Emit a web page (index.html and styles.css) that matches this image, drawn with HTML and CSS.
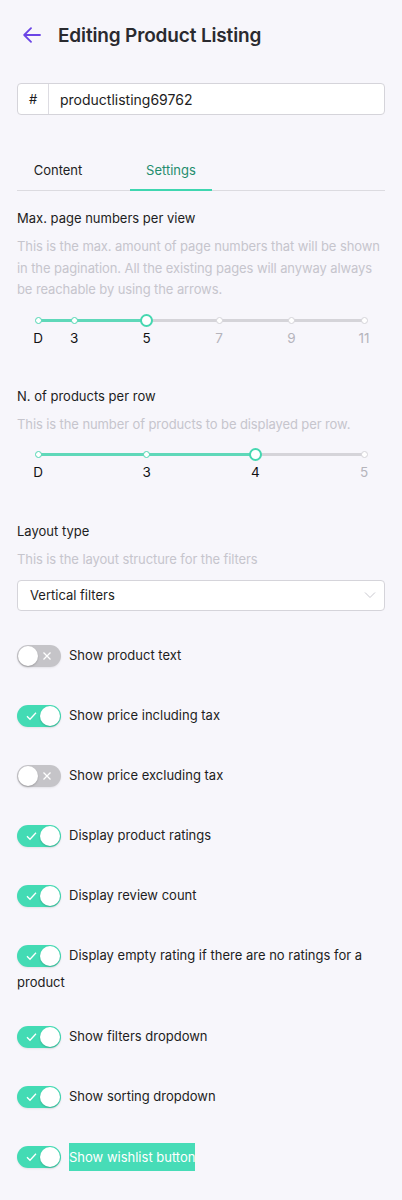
FILE: index.html
```html
<!DOCTYPE html>
<html>
<head>
<meta charset="utf-8">
<link rel="stylesheet" href="styles.css">
</head>
<body>
<div class="page">
  <header class="header">
    <svg class="back" width="18" height="16" viewBox="0 0 18 16"><path d="M17 8H1.5M8 1.2L1.2 8L8 14.8" fill="none" stroke="#6b45e6" stroke-width="1.8" stroke-linecap="round" stroke-linejoin="round"/></svg>
    <h1 class="title">Editing Product Listing</h1>
  </header>

  <div class="idfield">
    <span class="hash">#</span>
    <span class="idval">productlisting69762</span>
  </div>

  <nav class="tabs">
    <span class="tab">Content</span>
    <span class="tab active">Settings</span>
  </nav>

  <section class="field">
    <div class="label">Max. page numbers per view</div>
    <div class="desc">This is the max. amount of page numbers that will be shown in the pagination. All the existing pages will anyway always be reachable by using the arrows.</div>
    <div class="slider">
      <div class="track"><div class="fill" style="width:33.333%"></div></div>
      <span class="dot on" style="left:0%"></span>
      <span class="dot on" style="left:11.111%"></span>
      <span class="handle" style="left:33.333%"></span>
      <span class="dot" style="left:55.556%"></span>
      <span class="dot" style="left:77.778%"></span>
      <span class="dot" style="left:100%"></span>
      <span class="tick on" style="left:0%">D</span>
      <span class="tick on" style="left:11.111%">3</span>
      <span class="tick on" style="left:33.333%">5</span>
      <span class="tick" style="left:55.556%">7</span>
      <span class="tick" style="left:77.778%">9</span>
      <span class="tick" style="left:100%">11</span>
    </div>
  </section>

  <section class="field f2">
    <div class="label">N. of products per row</div>
    <div class="desc">This is the number of products to be displayed per row.</div>
    <div class="slider">
      <div class="track"><div class="fill" style="width:66.667%"></div></div>
      <span class="dot on" style="left:0%"></span>
      <span class="dot on" style="left:33.333%"></span>
      <span class="handle" style="left:66.667%"></span>
      <span class="dot" style="left:100%"></span>
      <span class="tick on" style="left:0%">D</span>
      <span class="tick on" style="left:33.333%">3</span>
      <span class="tick on" style="left:66.667%">4</span>
      <span class="tick" style="left:100%">5</span>
    </div>
  </section>

  <section class="field f3">
    <div class="label">Layout type</div>
    <div class="desc">This is the layout structure for the filters</div>
    <div class="select">
      <span>Vertical filters</span>
      <svg width="12" height="8" viewBox="0 0 12 8"><path d="M1 1.5L6 6.5L11 1.5" fill="none" stroke="#c9c8cf" stroke-width="1"/></svg>
    </div>
  </section>

  <div class="toggles">
    <div class="row"><span class="tg off"><svg class="ic" width="10" height="10" viewBox="0 0 10 10"><path d="M1.5 1.5L8.5 8.5M8.5 1.5L1.5 8.5" stroke="#fff" stroke-width="1.3"/></svg><span class="knob"></span></span>Show product text</div>
    <div class="row"><span class="tg"><svg class="ic" width="11" height="10" viewBox="0 0 11 10"><path d="M1 5.2L4 8.2L10 1.8" fill="none" stroke="#fff" stroke-width="1.3"/></svg><span class="knob"></span></span>Show price including tax</div>
    <div class="row"><span class="tg off"><svg class="ic" width="10" height="10" viewBox="0 0 10 10"><path d="M1.5 1.5L8.5 8.5M8.5 1.5L1.5 8.5" stroke="#fff" stroke-width="1.3"/></svg><span class="knob"></span></span>Show price excluding tax</div>
    <div class="row"><span class="tg"><svg class="ic" width="11" height="10" viewBox="0 0 11 10"><path d="M1 5.2L4 8.2L10 1.8" fill="none" stroke="#fff" stroke-width="1.3"/></svg><span class="knob"></span></span>Display product ratings</div>
    <div class="row"><span class="tg"><svg class="ic" width="11" height="10" viewBox="0 0 11 10"><path d="M1 5.2L4 8.2L10 1.8" fill="none" stroke="#fff" stroke-width="1.3"/></svg><span class="knob"></span></span>Display review count</div>
    <div class="row"><span class="tg"><svg class="ic" width="11" height="10" viewBox="0 0 11 10"><path d="M1 5.2L4 8.2L10 1.8" fill="none" stroke="#fff" stroke-width="1.3"/></svg><span class="knob"></span></span>Display empty rating if there are no ratings for a product</div>
    <div class="row"><span class="tg"><svg class="ic" width="11" height="10" viewBox="0 0 11 10"><path d="M1 5.2L4 8.2L10 1.8" fill="none" stroke="#fff" stroke-width="1.3"/></svg><span class="knob"></span></span>Show filters dropdown</div>
    <div class="row"><span class="tg"><svg class="ic" width="11" height="10" viewBox="0 0 11 10"><path d="M1 5.2L4 8.2L10 1.8" fill="none" stroke="#fff" stroke-width="1.3"/></svg><span class="knob"></span></span>Show sorting dropdown</div>
    <div class="row"><span class="tg"><svg class="ic" width="11" height="10" viewBox="0 0 11 10"><path d="M1 5.2L4 8.2L10 1.8" fill="none" stroke="#fff" stroke-width="1.3"/></svg><span class="knob"></span></span><span class="hl">Show wishlist button</span></div>
  </div>
</div>
</body>
</html>
```

FILE: styles.css
```css
* { box-sizing: border-box; }
html, body { margin: 0; padding: 0; background: #f7f6fb; }
body { font-family: Inter, "Noto Sans", sans-serif; color: #1d1d22; font-size: 13px; }
.page { padding: 0 17px 30px; }

.header { height: 70px; display: flex; align-items: center; padding-left: 6px; }
.back { flex: none; }
.title { margin: 0 0 0 17px; font-size: 19px; font-weight: 600; color: #2a2a2f; letter-spacing: -0.15px; }

.idfield { margin-top: 13px; height: 32px; display: flex; background: #fff; border: 1px solid #d5d4da; border-radius: 4px; }
.hash { width: 31px; border-right: 1px solid #dddce2; display: flex; align-items: center; justify-content: center; font-size: 13px; color: #1d1d22; }
.idval { display: flex; align-items: center; padding-left: 11px; font-size: 14px; color: #1d1d22; }

.tabs { margin-top: 36px; height: 40px; display: flex; border-bottom: 1px solid #dcdbe0; }
.tab { display: flex; align-items: center; justify-content: center; width: 82px; margin-bottom: -1px; border-bottom: 2px solid transparent; font-size: 13px; color: #1d1d22; }
.tab:first-child { margin-right: 31px; }
.tab.active { color: #1f8d6e; border-bottom-color: #3fd6b0; }

.field { margin-top: 17px; }
.f2 { margin-top: 34px; }
.f3 { margin-top: 35px; }
.label { line-height: 20px; font-size: 13px; color: #1d1d22; }
.desc { margin-top: 8px; line-height: 21.5px; font-size: 13px; color: #c6c5cd; letter-spacing: -0.1px; }

.slider { position: relative; margin: 11px 21px 0; height: 40px; }
.track { position: absolute; left: 0; right: 0; top: 7px; height: 3px; border-radius: 2px; background: #d5d4d9; }
.fill { height: 100%; background: #5fd8b9; border-radius: 2px; }
.dot { position: absolute; top: 5px; width: 7px; height: 7px; margin-left: -3.5px; border-radius: 50%; background: #fff; border: 1.5px solid #d5d4d9; }
.dot.on { border-color: #4fd6b2; }
.handle { position: absolute; top: 2px; width: 13px; height: 13px; margin-left: -6.5px; border-radius: 50%; background: #fff; border: 2px solid #45d7b0; }
.tick { position: absolute; top: 18px; transform: translateX(-50%); line-height: 16px; font-size: 13.5px; color: #b5b4bb; }
.tick.on { color: #111114; }

.select { margin-top: 9px; height: 31px; display: flex; align-items: center; justify-content: space-between; padding: 0 8px 0 12px; background: #fff; border: 1px solid #d5d4da; border-radius: 4px; font-size: 13px; color: #1d1d22; }

.toggles { margin-top: 30px; display: flex; flex-direction: column; gap: 29px; }
.row { line-height: 21px; font-size: 13px; color: #1d1d22; }
.tg { position: relative; display: inline-block; vertical-align: middle; width: 44px; height: 22px; margin: 4.5px 8px 4.5px 0; border-radius: 11px; background: #43dbb4; box-shadow: 0 1px 2px rgba(0,0,0,0.08); }
.tg.off { background: #c5c4c8; }
.knob { position: absolute; top: 1px; right: 1px; width: 20px; height: 20px; border-radius: 50%; background: #fff; box-shadow: 0 1px 2px rgba(0,0,0,0.2); }
.tg.off .knob { right: auto; left: 1px; }
.ic { position: absolute; top: 6px; left: 9px; }
.tg.off .ic { left: auto; right: 9px; }
.hl { display: inline-block; background: #47dcb7; color: #fff; line-height: 28px; vertical-align: middle; }
```
